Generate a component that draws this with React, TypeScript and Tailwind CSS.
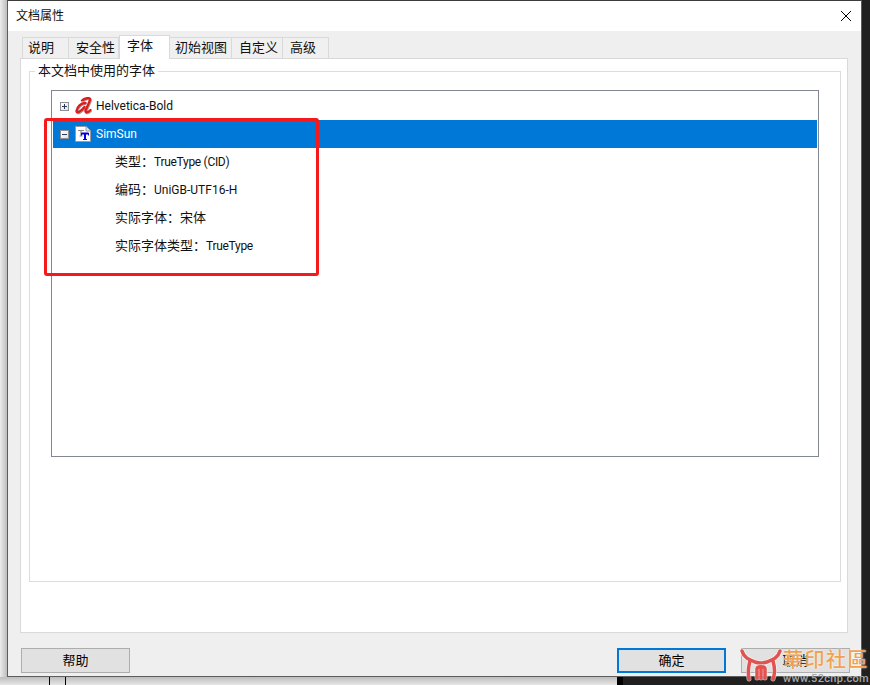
const latin = "font-['Roboto','Noto_Sans_CJK_SC',sans-serif]";
const cjk = "text-[13px]";

const tabs = [
  { label: "说明", box: "w-[47px] pl-[5px]" },
  { label: "安全性", box: "w-[50px] pl-[7px]" },
  { label: "字体", box: "w-[51px] pl-[7px]" },
  { label: "初始视图", box: "w-[62px] pl-[5px]" },
  { label: "自定义", box: "w-[51px] pl-[7px]" },
  { label: "高级", box: "w-[46px] pl-[7px]" },
];

function PlusBox({ open }: { open?: boolean }) {
  return (
    <span className="relative block h-[9px] w-[9px] shrink-0 border border-[#8e8f8f] bg-gradient-to-br from-white to-[#dfe3ea]">
      <span className="absolute left-[1px] top-[3px] h-px w-[5px] bg-[#2a3a5c]" />
      {!open && <span className="absolute left-[3px] top-[1px] h-[5px] w-px bg-[#2a3a5c]" />}
    </span>
  );
}

function Row({ name, value, cjkValue, tight }: { name: string; value: string; cjkValue?: boolean; tight?: boolean }) {
  return (
    <div className="flex h-[28px] items-center whitespace-pre pl-[62px] text-[12px] text-[#111]">
      <span className={cjk}>{name}：</span>
      <span className={cjkValue ? cjk : tight ? "tracking-[-0.3px]" : ""}>{value}</span>
    </div>
  );
}

function Button({ label, primary }: { label: string; primary?: boolean }) {
  return (
    <button
      className={
        primary
          ? "h-[25px] w-[109px] border-2 border-[#0078d7] bg-[#e1e1e1] text-[13px] text-black"
          : "h-[25px] w-[109px] border border-[#adadad] bg-[#e1e1e1] text-[13px] text-black"
      }
    >
      {label}
    </button>
  );
}

function ScriptA() {
  const bowl = "M10.500 6C6 5.500 2 10 1.500 14C1.500 16.500 5 15.500 9.500 10";
  const stem = "M7 3.500C9.500 1 14.500 .5 15 2C15 5 11.500 10 10.500 13.500C10 16 12.500 16 15.500 13";
  return (
    <svg width="17" height="18" viewBox="0 0 17 18" className="ml-[6px]">
      <g transform="translate(.8 .8)" stroke="#a0a0a0" strokeWidth="2.400" fill="none">
        <path d={bowl} />
        <path d={stem} />
      </g>
      <g stroke="#e01b1b" strokeWidth="2.400" fill="none" strokeLinecap="round">
        <path d={bowl} />
        <path d={stem} />
      </g>
    </svg>
  );
}

function TrueTypeIcon() {
  return (
    <svg width="16" height="16" viewBox="0 0 16 16" className="ml-[6px]">
      <path d="M.5 .5H11L15.500 5V15.500H.5Z" fill="#fff" stroke="#9a9a9a" />
      <path d="M11 .5V5H15.500" fill="#e8e8e8" stroke="#9a9a9a" />
      <path d="M3 4.500H9M6 4.500V10M4.500 10H7.500" stroke="#8a8a8a" strokeWidth="1.200" fill="none" />
      <path d="M6.500 7.500H13.500M10 7V13" stroke="#0000e0" strokeWidth="2" fill="none" />
      <path d="M6.500 7V9.500M13.500 7V9.500M8 13.500H12" stroke="#0000e0" strokeWidth="1" fill="none" />
    </svg>
  );
}

function WatermarkLogo() {
  const shape = (
    <>
      <path d="M4 6C6 13 12 15 17 17C20 18 26 18 29 17C34 15 40 13 42 6" />
      <path d="M12 16C10 23 10 29 11 34" />
      <path d="M35 16C37 23 37 29 35 34" />
      <path d="M19 33V24C19 21 27 21 27 24V33" />
      <path d="M23 22V33" />
    </>
  );
  return (
    <svg width="46" height="40" viewBox="0 0 46 40" className="shrink-0">
      <g stroke="#fff" strokeOpacity="0.6" strokeWidth="5" fill="none" strokeLinecap="round">
        {shape}
      </g>
      <g stroke="#e2534f" strokeWidth="3.500" fill="none" strokeLinecap="round">
        {shape}
      </g>
    </svg>
  );
}

export default function App() {
  return (
    <div className={`relative h-[685px] w-[870px] overflow-hidden bg-[#202020] ${latin}`}>
      {/* what is behind the window */}
      <div className="absolute bottom-0 left-0 top-0 w-[7px] bg-gradient-to-r from-[#ececec] to-[#bdbdbd]" />
      <div className="absolute bottom-0 left-0 h-[8px] w-[617px] bg-gradient-to-b from-[#bdbdbd] to-[#e6e6e6]" />
      <div className="absolute bottom-0 left-[49px] h-[8px] w-px bg-black" />
      <div className="absolute bottom-0 left-[65px] h-[8px] w-px bg-black" />
      <div className="absolute bottom-0 left-[617px] h-[8px] w-[6px] bg-black" />

      <div className="relative ml-[7px] flex h-[677px] w-[855px] flex-col border border-[#5c5c5c] border-t-[#3c3c3c] bg-[#efefef]">
        <div className="flex h-[30px] shrink-0 items-center justify-between bg-white pl-[8px] pr-[9px] text-[#111]">
          <span className="text-[12px]">文档属性</span>
          <svg width="12" height="12" viewBox="0 0 12 12" className="text-black">
            <path d="M1 1L11 11M11 1L1 11" stroke="currentColor" strokeWidth="1" fill="none" />
          </svg>
        </div>

        <div className="flex flex-1 flex-col px-[12px] pt-[4px]">
          <div className="flex h-[23px] items-end pl-[2px]">
            {tabs.map((t, i) =>
              i === 2 ? (
                <div
                  key={t.label}
                  className={`${t.box} z-10 -mb-px flex h-[24px] items-start border border-b-0 border-[#d9d9d9] bg-white text-[13px] text-[#111]`}
                >
                  {t.label}
                </div>
              ) : (
                <div
                  key={t.label}
                  className={`${t.box} flex h-[21px] items-center border border-b-0 border-l-0 border-[#d9d9d9] bg-[#f0f0f0] text-[13px] text-[#111] first:border-l`}
                >
                  {t.label}
                </div>
              ),
            )}
          </div>

          <div className="h-[575px] w-[828px] border border-[#d9d9d9] bg-white pl-[8px] pt-[5px]">
            <fieldset className="h-[518px] w-[812px] border border-[#dcdcdc] pl-[21px] pt-[12px]">
              <legend className="-ml-[16px] px-[3px] text-[13px] leading-[14px] text-[#111]">本文档中使用的字体</legend>
              <div className="h-[367px] w-[768px] border border-[#828790] bg-white px-px pt-px">
                <div className="flex h-[28px] items-center pl-[7px] text-[12px] text-[#111]">
                  <PlusBox />
                  <ScriptA />
                  <span className="ml-[4px]">Helvetica-Bold</span>
                </div>
                <div className="flex h-[28px] items-center bg-[#0078d7] pl-[7px] text-[12px] text-white">
                  <PlusBox open />
                  <TrueTypeIcon />
                  <span className="ml-[5px]">SimSun</span>
                </div>
                <Row name="类型" value="TrueType (CID)" tight />
                <Row name="编码" value="UniGB-UTF16-H" />
                <Row name="实际字体" value="宋体" cjkValue />
                <Row name="实际字体类型" value="TrueType" tight />
              </div>
            </fieldset>
          </div>

          <div className="-mr-px flex items-center justify-between pl-[1px] pt-[15px]">
            <Button label="帮助" />
            <div className="flex gap-[15px]">
              <Button label="确定" primary />
              <Button label="取消" />
            </div>
          </div>
        </div>
      </div>

      {/* red annotation box */}
      <div className="absolute left-[738px] top-[645px] flex h-[40px] w-[132px] items-start">
        <WatermarkLogo />
        <div className="-ml-px flex flex-col pt-[3px]">
          <span className="whitespace-nowrap text-[20px] font-medium leading-[24px] tracking-[1.500px] text-[#f2a24e] [text-shadow:0_0_2px_#fff]">
            華印社區
          </span>
          <span className="whitespace-nowrap text-[11px] font-medium leading-[13px] tracking-[0.3px] text-[#a8a8a8]">www.52cnp.com</span>
        </div>
      </div>
      <div className="absolute left-[44px] top-[118px] h-[158px] w-[275px] rounded-[3px] border-[3px] border-[#f5191c]" />
    </div>
  );
}
